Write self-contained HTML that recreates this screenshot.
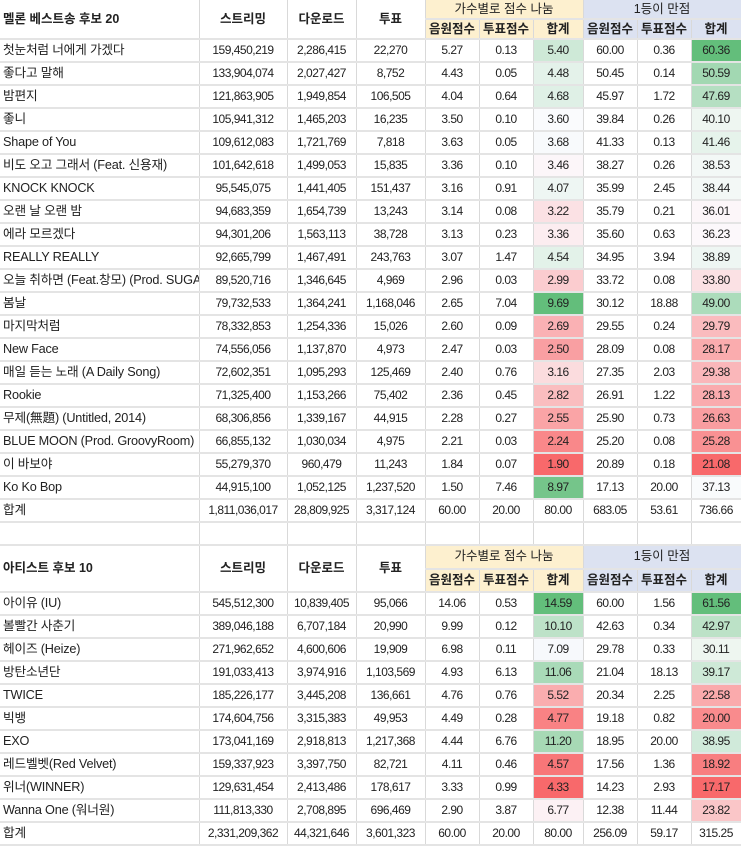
<!DOCTYPE html>
<html><head><meta charset="utf-8">
<style>
html,body{margin:0;padding:0;background:#fff;width:741px;height:850px;overflow:hidden}
table{border-collapse:collapse;table-layout:fixed;width:741px;font-family:"Liberation Sans","Noto Sans CJK KR",sans-serif;font-size:12px;letter-spacing:-0.5px;color:#222}
td{border-right:1px solid #d9d9d9;border-bottom:2px solid #e4e4e4;height:21px;padding:0;text-align:center;white-space:nowrap;overflow:hidden;line-height:21px}
td.l{text-align:left;padding-left:3px;font-size:12.7px;letter-spacing:-0.2px}
tr.h td{height:18px;line-height:18px;font-weight:bold;font-size:12.5px;letter-spacing:0}
tr.h2 td{height:21.5px;line-height:21.5px;font-weight:bold;font-size:12.5px;letter-spacing:0}
td.y{background:#fdf0cf}
td.b{background:#dce2f1}
td.t{font-weight:bold;text-align:left;padding-left:3px;font-size:12.5px}
</style></head><body>
<table>
<colgroup><col style="width:199px"><col style="width:88px"><col style="width:69px"><col style="width:69px"><col style="width:54px"><col style="width:54px"><col style="width:50px"><col style="width:54px"><col style="width:54px"><col style="width:50px"></colgroup>
<tr class="h"><td rowspan="2" class="t">멜론 베스트송 후보 20</td><td rowspan="2" style="font-weight:bold">스트리밍</td><td rowspan="2" style="font-weight:bold">다운로드</td><td rowspan="2" style="font-weight:bold">투표</td><td colspan="3" class="y" style="font-weight:normal">가수별로 점수 나눔</td><td colspan="3" class="b" style="font-weight:normal">1등이 만점</td></tr>
<tr class="h"><td class="y">음원점수</td><td class="y">투표점수</td><td class="y">합계</td><td class="b">음원점수</td><td class="b">투표점수</td><td class="b">합계</td></tr>
<tr><td class="l">첫눈처럼 너에게 가겠다</td><td>159,450,219</td><td>2,286,415</td><td>22,270</td><td>5.27</td><td>0.13</td><td style="background:#cee9d7">5.40</td><td>60.00</td><td>0.36</td><td style="background:#63be7b">60.36</td></tr>
<tr><td class="l">좋다고 말해</td><td>133,904,074</td><td>2,027,427</td><td>8,752</td><td>4.43</td><td>0.05</td><td style="background:#e4f2ea">4.48</td><td>50.45</td><td>0.14</td><td style="background:#a2d8b2">50.59</td></tr>
<tr><td class="l">밤편지</td><td>121,863,905</td><td>1,949,854</td><td>106,505</td><td>4.04</td><td>0.64</td><td style="background:#dff0e6">4.68</td><td>45.97</td><td>1.72</td><td style="background:#b5dfc2">47.69</td></tr>
<tr><td class="l">좋니</td><td>105,941,312</td><td>1,465,203</td><td>16,235</td><td>3.50</td><td>0.10</td><td style="background:#fafbfd">3.60</td><td>39.84</td><td>0.26</td><td style="background:#eef6f1">40.10</td></tr>
<tr><td class="l">Shape of You</td><td>109,612,083</td><td>1,721,769</td><td>7,818</td><td>3.63</td><td>0.05</td><td style="background:#f8fafc">3.68</td><td>41.33</td><td>0.13</td><td style="background:#e6f3eb">41.46</td></tr>
<tr><td class="l">비도 오고 그래서 (Feat. 신용재)</td><td>101,642,618</td><td>1,499,053</td><td>15,835</td><td>3.36</td><td>0.10</td><td style="background:#fcf6f9">3.46</td><td>38.27</td><td>0.26</td><td style="background:#f3f8f6">38.53</td></tr>
<tr><td class="l">KNOCK KNOCK</td><td>95,545,075</td><td>1,441,405</td><td>151,437</td><td>3.16</td><td>0.91</td><td style="background:#eef6f3">4.07</td><td>35.99</td><td>2.45</td><td style="background:#f3f8f6">38.44</td></tr>
<tr><td class="l">오랜 날 오랜 밤</td><td>94,683,359</td><td>1,654,739</td><td>13,243</td><td>3.14</td><td>0.08</td><td style="background:#fbe1e4">3.22</td><td>35.79</td><td>0.21</td><td style="background:#fcf6f9">36.01</td></tr>
<tr><td class="l">에라 모르겠다</td><td>94,301,206</td><td>1,563,113</td><td>38,728</td><td>3.13</td><td>0.23</td><td style="background:#fcedf0">3.36</td><td>35.60</td><td>0.63</td><td style="background:#fcf8fb">36.23</td></tr>
<tr><td class="l">REALLY REALLY</td><td>92,665,799</td><td>1,467,491</td><td>243,763</td><td>3.07</td><td>1.47</td><td style="background:#e3f2e9">4.54</td><td>34.95</td><td>3.94</td><td style="background:#eef6f3">38.89</td></tr>
<tr><td class="l">오늘 취하면 (Feat.창모) (Prod. SUGA)</td><td>89,520,716</td><td>1,346,645</td><td>4,969</td><td>2.96</td><td>0.03</td><td style="background:#fbcccf">2.99</td><td>33.72</td><td>0.08</td><td style="background:#fbe1e4">33.80</td></tr>
<tr><td class="l">봄날</td><td>79,732,533</td><td>1,364,241</td><td>1,168,046</td><td>2.65</td><td>7.04</td><td style="background:#63be7b">9.69</td><td>30.12</td><td>18.88</td><td style="background:#acdcbb">49.00</td></tr>
<tr><td class="l">마지막처럼</td><td>78,332,853</td><td>1,254,336</td><td>15,026</td><td>2.60</td><td>0.09</td><td style="background:#fab1b4">2.69</td><td>29.55</td><td>0.24</td><td style="background:#fabbbe">29.79</td></tr>
<tr><td class="l">New Face</td><td>74,556,056</td><td>1,137,870</td><td>4,973</td><td>2.47</td><td>0.03</td><td style="background:#f99fa2">2.50</td><td>28.09</td><td>0.08</td><td style="background:#faacae">28.17</td></tr>
<tr><td class="l">매일 듣는 노래 (A Daily Song)</td><td>72,602,351</td><td>1,095,293</td><td>125,469</td><td>2.40</td><td>0.76</td><td style="background:#fbdcde">3.16</td><td>27.35</td><td>2.03</td><td style="background:#fab7ba">29.38</td></tr>
<tr><td class="l">Rookie</td><td>71,325,400</td><td>1,153,266</td><td>75,402</td><td>2.36</td><td>0.45</td><td style="background:#fabdbf">2.82</td><td>26.91</td><td>1.22</td><td style="background:#faabae">28.13</td></tr>
<tr><td class="l">무제(無題) (Untitled, 2014)</td><td>68,306,856</td><td>1,339,167</td><td>44,915</td><td>2.28</td><td>0.27</td><td style="background:#faa4a6">2.55</td><td>25.90</td><td>0.73</td><td style="background:#f99da0">26.63</td></tr>
<tr><td class="l">BLUE MOON (Prod. GroovyRoom)</td><td>66,855,132</td><td>1,030,034</td><td>4,975</td><td>2.21</td><td>0.03</td><td style="background:#f9888a">2.24</td><td>25.20</td><td>0.08</td><td style="background:#f99193">25.28</td></tr>
<tr><td class="l">이 바보야</td><td>55,279,370</td><td>960,479</td><td>11,243</td><td>1.84</td><td>0.07</td><td style="background:#f8696b">1.90</td><td>20.89</td><td>0.18</td><td style="background:#f8696b">21.08</td></tr>
<tr><td class="l">Ko Ko Bop</td><td>44,915,100</td><td>1,052,125</td><td>1,237,520</td><td>1.50</td><td>7.46</td><td style="background:#75c58a">8.97</td><td>17.13</td><td>20.00</td><td style="background:#f9fbfc">37.13</td></tr>
<tr><td class="l">합계</td><td>1,811,036,017</td><td>28,809,925</td><td>3,317,124</td><td>60.00</td><td>20.00</td><td>80.00</td><td>683.05</td><td>53.61</td><td>736.66</td></tr>
<tr><td></td><td></td><td></td><td></td><td></td><td></td><td></td><td></td><td></td><td></td></tr>
<tr class="h2"><td rowspan="2" class="t">아티스트 후보 10</td><td rowspan="2">스트리밍</td><td rowspan="2">다운로드</td><td rowspan="2">투표</td><td colspan="3" class="y" style="font-weight:normal">가수별로 점수 나눔</td><td colspan="3" class="b" style="font-weight:normal">1등이 만점</td></tr>
<tr class="h2"><td class="y">음원점수</td><td class="y">투표점수</td><td class="y">합계</td><td class="b">음원점수</td><td class="b">투표점수</td><td class="b">합계</td></tr>
<tr><td class="l">아이유 (IU)</td><td>545,512,300</td><td>10,839,405</td><td>95,066</td><td>14.06</td><td>0.53</td><td style="background:#63be7b">14.59</td><td>60.00</td><td>1.56</td><td style="background:#63be7b">61.56</td></tr>
<tr><td class="l">볼빨간 사춘기</td><td>389,046,188</td><td>6,707,184</td><td>20,990</td><td>9.99</td><td>0.12</td><td style="background:#bde2c8">10.10</td><td>42.63</td><td>0.34</td><td style="background:#bce2c7">42.97</td></tr>
<tr><td class="l">헤이즈 (Heize)</td><td>271,962,652</td><td>4,600,606</td><td>19,909</td><td>6.98</td><td>0.11</td><td style="background:#f7f9fc">7.09</td><td>29.78</td><td>0.33</td><td style="background:#eef6f0">30.11</td></tr>
<tr><td class="l">방탄소년단</td><td>191,033,413</td><td>3,974,916</td><td>1,103,569</td><td>4.93</td><td>6.13</td><td style="background:#a9dab8">11.06</td><td>21.04</td><td>18.13</td><td style="background:#cee9d7">39.17</td></tr>
<tr><td class="l">TWICE</td><td>185,226,177</td><td>3,445,208</td><td>136,661</td><td>4.76</td><td>0.76</td><td style="background:#faadaf">5.52</td><td>20.34</td><td>2.25</td><td style="background:#faaaac">22.58</td></tr>
<tr><td class="l">빅뱅</td><td>174,604,756</td><td>3,315,383</td><td>49,953</td><td>4.49</td><td>0.28</td><td style="background:#f98284">4.77</td><td>19.18</td><td>0.82</td><td style="background:#f98b8d">20.00</td></tr>
<tr><td class="l">EXO</td><td>173,041,169</td><td>2,918,813</td><td>1,217,368</td><td>4.44</td><td>6.76</td><td style="background:#a7d9b5">11.20</td><td>18.95</td><td>20.00</td><td style="background:#d0eada">38.95</td></tr>
<tr><td class="l">레드벨벳(Red Velvet)</td><td>159,337,923</td><td>3,397,750</td><td>82,721</td><td>4.11</td><td>0.46</td><td style="background:#f87678">4.57</td><td>17.56</td><td>1.36</td><td style="background:#f87e80">18.92</td></tr>
<tr><td class="l">위너(WINNER)</td><td>129,631,454</td><td>2,413,486</td><td>178,617</td><td>3.33</td><td>0.99</td><td style="background:#f8696b">4.33</td><td>14.23</td><td>2.93</td><td style="background:#f8696b">17.17</td></tr>
<tr><td class="l">Wanna One (워너원)</td><td>111,813,330</td><td>2,708,895</td><td>696,469</td><td>2.90</td><td>3.87</td><td style="background:#fcf1f4">6.77</td><td>12.38</td><td>11.44</td><td style="background:#fac6c8">23.82</td></tr>
<tr><td class="l">합계</td><td>2,331,209,362</td><td>44,321,646</td><td>3,601,323</td><td>60.00</td><td>20.00</td><td>80.00</td><td>256.09</td><td>59.17</td><td>315.25</td></tr>
</table>
</body></html>
